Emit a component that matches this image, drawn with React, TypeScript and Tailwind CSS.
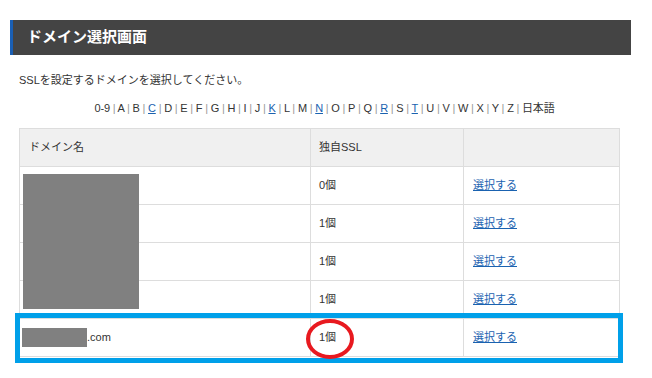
import React from 'react';

const letters = ['0-9', 'A', 'B', 'C', 'D', 'E', 'F', 'G', 'H', 'I', 'J', 'K', 'L', 'M', 'N', 'O', 'P', 'Q', 'R', 'S', 'T', 'U', 'V', 'W', 'X', 'Y', 'Z'];
const linked = ['C', 'K', 'N', 'R', 'T'];

const rows = [
    { name: '', count: '0個' },
    { name: '', count: '1個' },
    { name: '', count: '1個' },
    { name: '', count: '1個' },
];

export default function App() {
    return (
        <div className="relative w-[652px] h-[378px] bg-white text-[#333] font-['Liberation_Sans','Noto_Sans_CJK_JP',sans-serif] overflow-hidden">
            <div className="pt-5 pl-[10px] w-[631px]">
                {/* 見出し */}
                <div className="h-[35px] bg-[#444] border-l-[3px] border-[#1a5fb4] flex items-center pl-[14px] text-white font-bold text-[15px]">
                    ドメイン選択画面
                </div>

                <div className="pl-[9px] pr-[11px]">
                    <p className="mt-[18px] text-[11px] leading-[14px]">SSLを設定するドメインを選択してください。</p>

                    <p className="mt-[14px] text-center text-[11px] leading-[14px] pl-[10px] tracking-[-0.2px]">
                        {letters.map((l) => (
                            <span key={l}>
                                {linked.includes(l) ? (
                                    <a className="text-[#1a62b0] underline">{l}</a>
                                ) : (
                                    <span>{l}</span>
                                )}
                                <span className="text-[#999]"> | </span>
                            </span>
                        ))}
                        <span>日本語</span>
                    </p>

                    <table className="mt-[13px] w-[601px] border-collapse text-[11px] table-fixed">
                        <thead>
                            <tr className="h-[38px] bg-[#f0f0f0]">
                                <th className="w-[291px] border border-[#ddd] text-left font-normal pl-[9px]">ドメイン名</th>
                                <th className="w-[153px] border border-[#ddd] text-left font-normal pl-[8px]">独自SSL</th>
                                <th className="border border-[#ddd]"></th>
                            </tr>
                        </thead>
                        <tbody>
                            {rows.map((r, i) => (
                                <tr key={i} className="h-[38px]">
                                    <td className="border border-[#ddd] pl-[9px]">{r.name}</td>
                                    <td className="border border-[#ddd] pl-[8px]">{r.count}</td>
                                    <td className="border border-[#ddd] pl-[9px]">
                                        <a className="text-[#1a62b0] underline">選択する</a>
                                    </td>
                                </tr>
                            ))}
                            <tr className="h-[38px]">
                                <td className="border border-[#ddd] pl-[2px]">
                                    <span className="inline-block w-[65px] h-[19px] bg-[#808080] align-middle"></span>
                                    <span className="align-middle">.com</span>
                                </td>
                                <td className="border border-[#ddd] pl-[8px]">1個</td>
                                <td className="border border-[#ddd] pl-[9px]">
                                    <a className="text-[#1a62b0] underline">選択する</a>
                                </td>
                            </tr>
                        </tbody>
                    </table>
                </div>
            </div>

            {/* 塗りつぶし・強調の注釈 */}
            <div className="absolute left-[23px] top-[174px] w-[116px] h-[135px] bg-[#808080]" />
            <div className="absolute left-[15px] top-[313px] w-[608px] h-[50px] border-[5px] border-[#00a0e9]" />
            <svg className="absolute left-[304px] top-[317px]" width="54" height="44" viewBox="0 0 54 44">
                <ellipse cx="26" cy="22" rx="22" ry="18" fill="none" stroke="#e8191f" strokeWidth="4" />
            </svg>
        </div>
    );
}
